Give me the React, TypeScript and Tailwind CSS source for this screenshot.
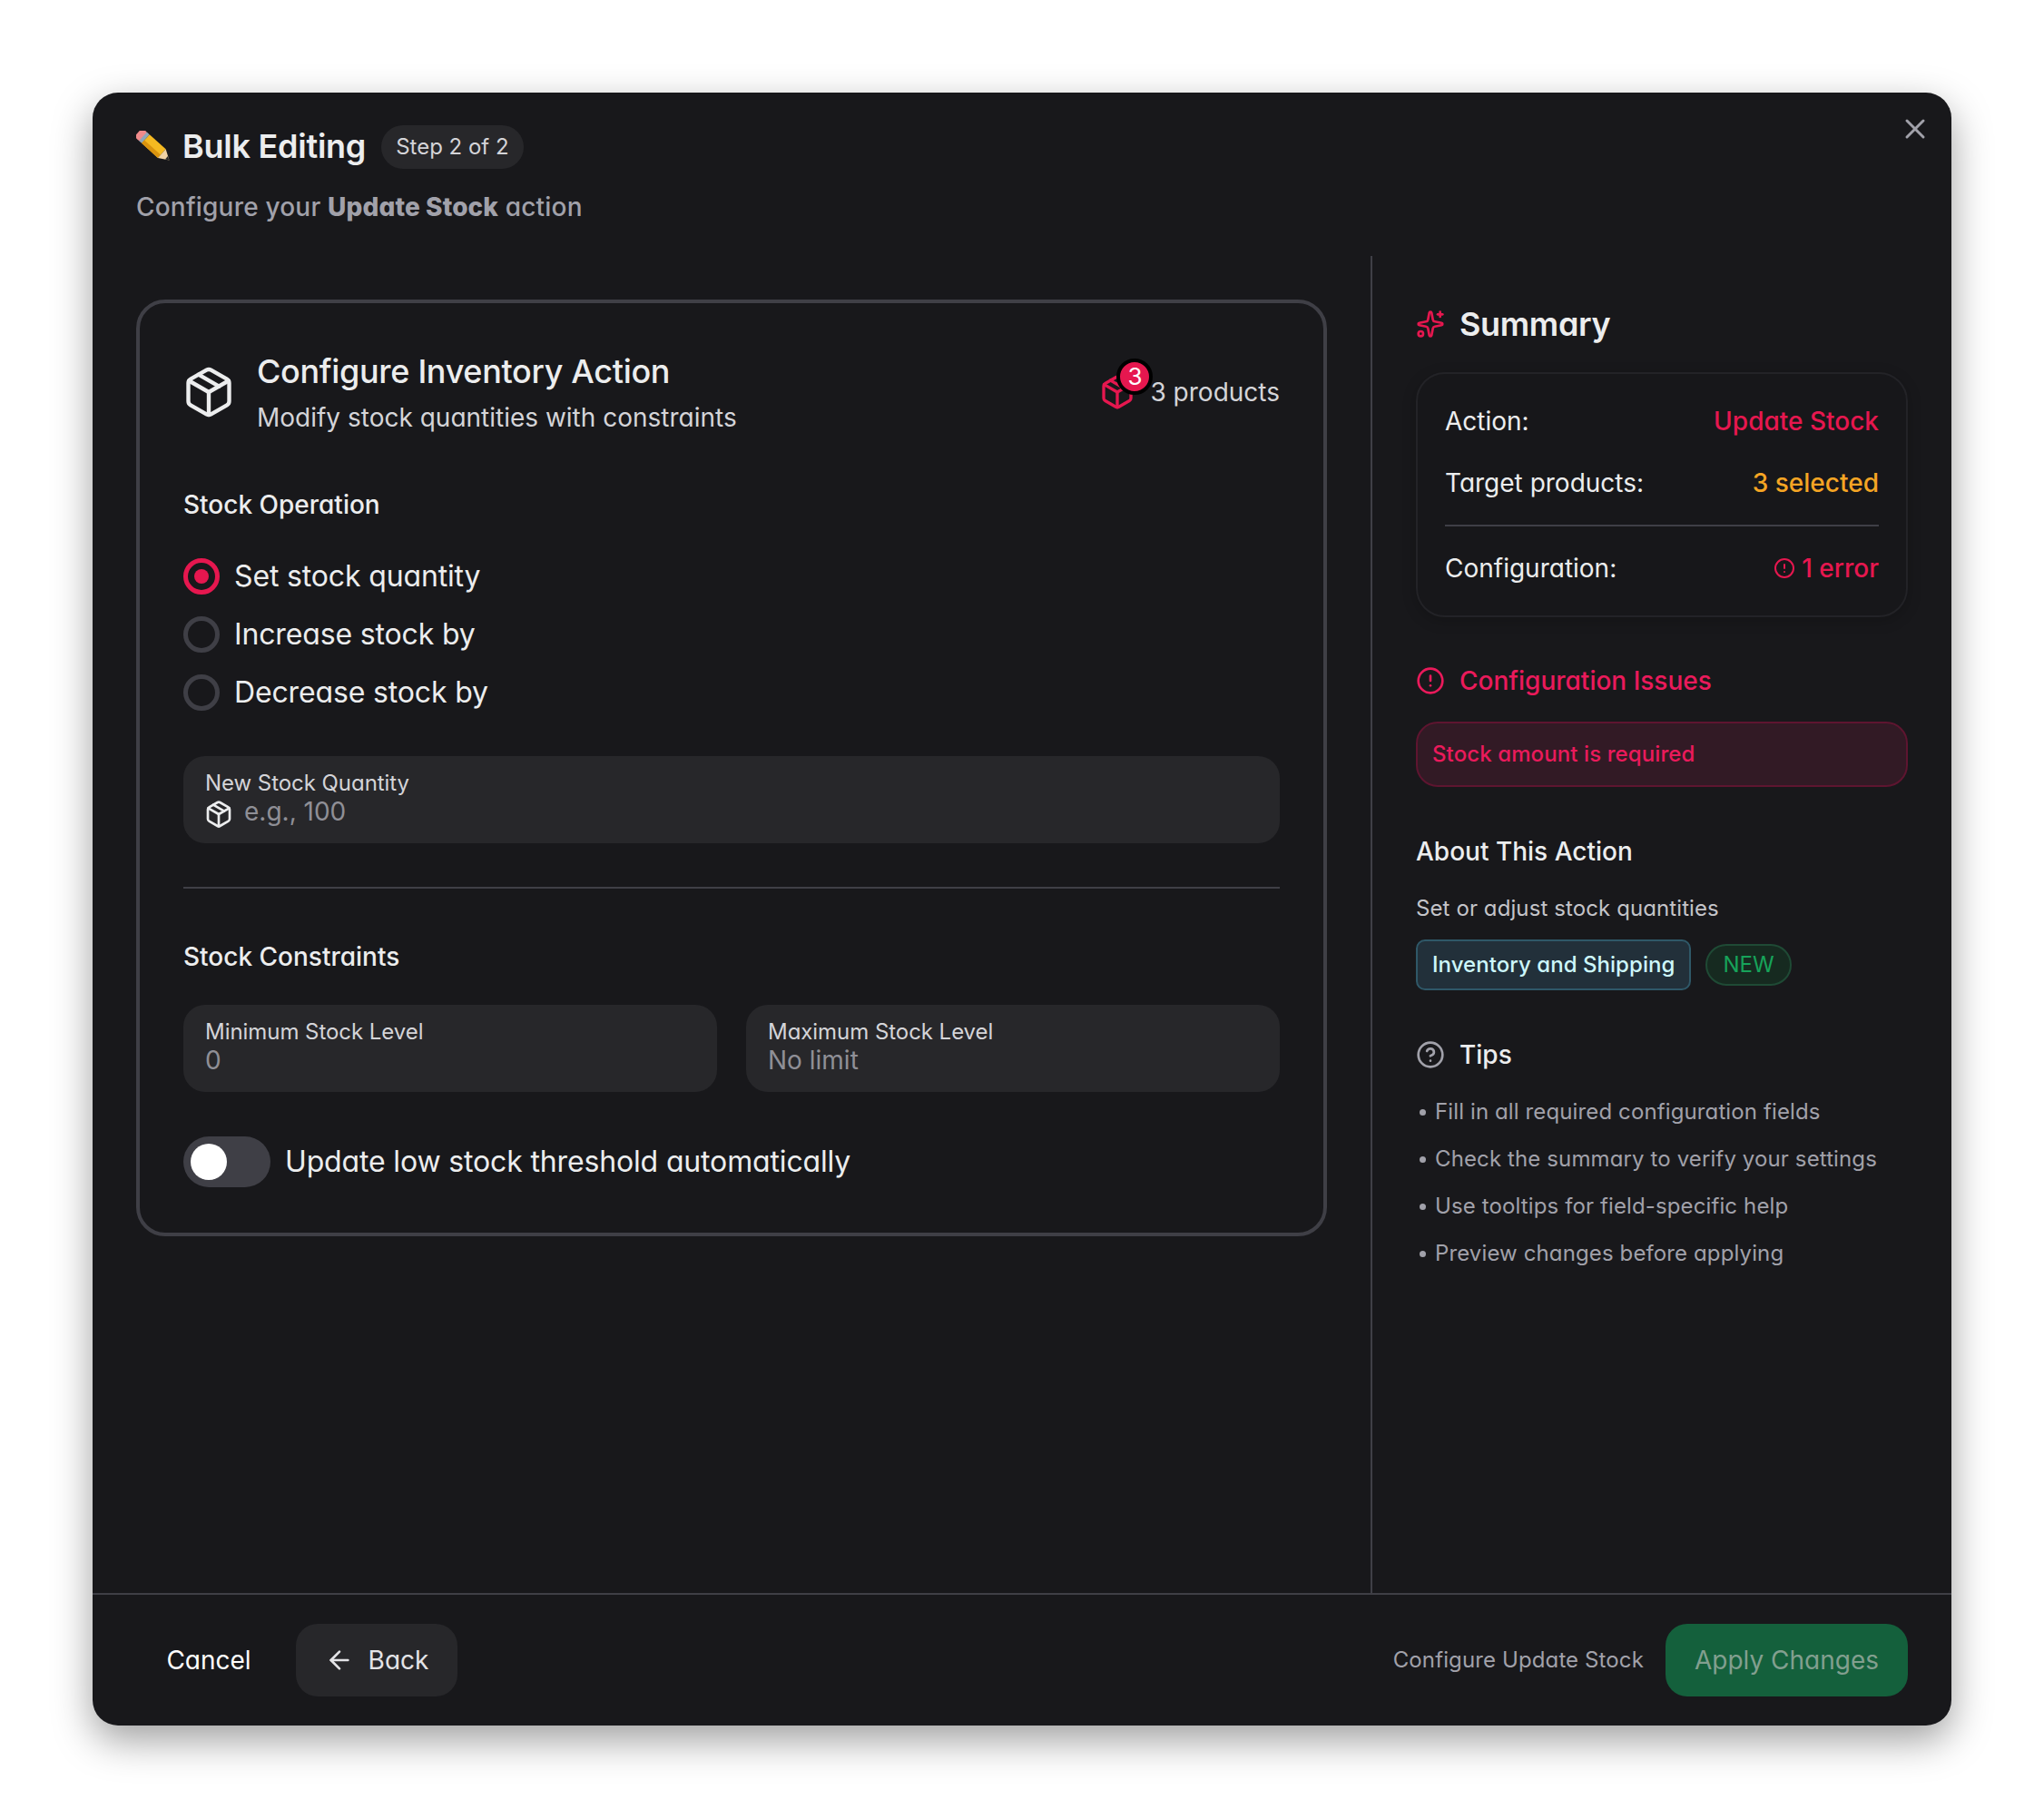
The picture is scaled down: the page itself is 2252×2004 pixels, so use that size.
import React from 'react';
import { Package, X, Sparkles, CircleAlert, CircleHelp, ArrowLeft } from 'lucide-react';

function PencilIcon() {
  return (
    <svg width="38" height="36" viewBox="0 0 38 36" className="shrink-0">
      <g transform="translate(6 5) rotate(42)">
        <rect x="-5" y="-6.5" width="9" height="13" rx="3.5" fill="#f08a8a" />
        <rect x="2" y="-6.5" width="4" height="13" fill="#8fa6b8" />
        <rect x="6" y="-6.5" width="24" height="13" fill="#f5b921" />
        <rect x="6" y="2" width="24" height="4.5" fill="#d9930f" />
        <polygon points="30,-6.5 30,6.5 41,0" fill="#f2d3a4" />
        <polygon points="37,-2.2 37,2.2 41,0" fill="#2b2b2b" />
      </g>
    </svg>
  );
}

function Radio({ label, checked }: { label: string; checked?: boolean }) {
  return (
    <div className="flex h-10 items-center gap-4">
      <span
        className={
          checked
            ? 'flex h-10 w-10 items-center justify-center rounded-full border-[5px] border-[#e6174f]'
            : 'flex h-10 w-10 items-center justify-center rounded-full border-[5px] border-[#3f3f46]'
        }
      >
        {checked && <span className="h-4 w-4 rounded-full bg-[#e6174f]" />}
      </span>
      <span className="text-[32px] leading-10 tracking-[-0.15px] text-[#ecedee]">{label}</span>
    </div>
  );
}

function Field({ label, value }: { label: string; value: string }) {
  return (
    <div className="h-24 flex-1 rounded-3xl bg-[#27272a] px-6 pt-[15px]">
      <div className="text-2xl leading-[30px] tracking-[-0.05px] text-[#d4d4d8]">{label}</div>
      <div className="text-[28px] leading-8 text-[#8f8f96]">{value}</div>
    </div>
  );
}

function SummaryRow({ label, children }: { label: string; children: React.ReactNode }) {
  return (
    <div className="flex h-10 items-center justify-between text-[28px] leading-10">
      <span className="text-[#ecedee]">{label}</span>
      {children}
    </div>
  );
}

const tips = [
  'Fill in all required configuration fields',
  'Check the summary to verify your settings',
  'Use tooltips for field-specific help',
  'Preview changes before applying',
];

export default function App() {
  return (
    <div className="flex h-[2004px] justify-center bg-white pt-[102px] [font-family:Inter,sans-serif] [font-feature-settings:'cv11']">
      <div className="relative flex h-[1799px] w-[2048px] flex-col rounded-[28px] bg-[#18181b] shadow-[0_16px_44px_rgba(0,0,0,0.38)]">
        <button className="absolute right-[22px] top-[22px] text-[#a1a1aa]">
          <X size={36} strokeWidth={2} />
        </button>

        {/* Header */}
        <header className="px-12 pb-[34px] pt-9">
          <div className="flex h-12 items-center">
            <PencilIcon />
            <h2 className="ml-[13px] -translate-y-px text-4xl font-semibold tracking-[-0.25px] text-[#ecedee]">Bulk Editing</h2>
            <span className="ml-[17px] flex h-12 items-center rounded-full bg-[#27272a] px-4 text-2xl text-[#d4d4d8]">
              Step 2 of 2
            </span>
          </div>
          <p className="mt-[22px] text-[28px] font-medium leading-10 tracking-[0.2px] text-[#a1a1aa]">
            Configure your <b className="font-extrabold tracking-[0.1px]">Update Stock</b> action
          </p>
        </header>

        {/* Body */}
        <div className="flex min-h-0 flex-1">
          <div className="w-[1408px] shrink-0 px-12 pt-12">
            <div className="rounded-[32px] border-4 border-[#3f3f46] px-12 pb-[50px] pt-[47px]">
              <div className="flex justify-between">
                <div className="flex items-center gap-[25px]">
                  <Package size={60} strokeWidth={1.75} className="-mx-0.5 translate-y-px text-[#ecedee]" />
                  <div>
                    <h3 className="text-4xl font-medium leading-14 tracking-[-0.32px] text-[#ecedee]">Configure Inventory Action</h3>
                    <p className="mt-[3px] text-[28px] leading-10 text-[#d4d4d8]">Modify stock quantities with constraints</p>
                  </div>
                </div>
                <div className="flex items-center gap-[16px] pt-[2px]">
                  <span className="relative">
                    <Package size={40} strokeWidth={2} className="text-[#e6174f]" />
                    <span className="absolute -right-[19px] -top-[17px] flex h-10 w-10 items-center justify-center rounded-full border-4 border-black bg-[#e6174f] text-[26px] text-white">
                      3
                    </span>
                  </span>
                  <span className="text-[28px] text-[#d4d4d8]">3 products</span>
                </div>
              </div>

              <div className="mt-14 text-[28px] font-medium leading-10 text-[#ecedee]">Stock Operation</div>
              <div className="mt-[39px] flex flex-col gap-6">
                <Radio label="Set stock quantity" checked />
                <Radio label="Increase stock by" />
                <Radio label="Decrease stock by" />
              </div>

              <div className="mt-[50px] h-24 rounded-3xl bg-[#27272a] px-6 pt-[15px]">
                <div className="text-2xl leading-[30px] tracking-[-0.05px] text-[#d4d4d8]">New Stock Quantity</div>
                <div className="flex h-8 items-center gap-[13px]">
                  <Package size={32} strokeWidth={2} className="-mx-px mt-[6px] text-[#ecedee]" />
                  <span className="text-[28px] leading-8 text-[#8f8f96]">e.g., 100</span>
                </div>
              </div>

              <div className="mt-[48px] h-0.5 bg-[#3f3f46]" />

              <div className="mt-[55px] text-[28px] font-medium leading-10 text-[#ecedee]">Stock Constraints</div>
              <div className="mt-[33px] flex gap-8">
                <Field label="Minimum Stock Level" value="0" />
                <Field label="Maximum Stock Level" value="No limit" />
              </div>

              <div className="mt-[49px] flex items-center gap-4">
                <span className="flex h-14 w-24 items-center rounded-full bg-[#3f3f46] pl-2">
                  <span className="h-10 w-10 rounded-full bg-white" />
                </span>
                <span className="text-[32px] leading-10 tracking-[-0.15px] text-[#ecedee]">Update low stock threshold automatically</span>
              </div>
            </div>
          </div>

          {/* Summary */}
          <aside className="flex-1 border-l-2 border-[#3f3f46] pl-12 pr-12 pt-[51px]">
            <div className="flex h-12 items-center gap-4">
              <Sparkles size={32} strokeWidth={2} className="text-[#e6174f]" />
              <h3 className="text-4xl font-semibold tracking-[-0.35px] text-[#ecedee]">Summary</h3>
            </div>

            <div className="mt-[29px] rounded-[32px] border-2 border-[#232327] bg-[#17171a] px-[30px] pb-[32px] pt-[32px] shadow-[0_4px_16px_rgba(0,0,0,0.2)]">
              <SummaryRow label="Action:">
                <span className="font-medium text-[#e6174f]">Update Stock</span>
              </SummaryRow>
              <div className="mt-7">
                <SummaryRow label="Target products:">
                  <span className="font-medium text-[#f5a524]">3 selected</span>
                </SummaryRow>
              </div>
              <div className="mt-[26px] h-0.5 bg-[#3f3f46]" />
              <div className="mt-[26px]">
                <SummaryRow label="Configuration:">
                  <span className="flex items-center gap-[7px] font-medium text-[#e6174f]">
                    <CircleAlert size={24} strokeWidth={2} />1 error
                  </span>
                </SummaryRow>
              </div>
            </div>

            <div className="mt-[50px] flex h-10 items-center gap-4">
              <CircleAlert size={32} strokeWidth={2} className="text-[#ea1a5b]" />
              <span className="text-[28px] font-medium text-[#ea1a5b]">Configuration Issues</span>
            </div>
            <div className="mt-[25px] flex h-[72px] items-center rounded-3xl border-2 border-[#5e1530] bg-[#321a25] px-4 text-2xl font-medium tracking-[0.1px] text-[#ea1a5b]">
              Stock amount is required
            </div>

            <div className="mt-[51px] text-[28px] font-medium leading-10 text-[#ecedee]">About This Action</div>
            <p className="mt-[27px] text-2xl leading-8 tracking-[0.1px] text-[#c4c4c9]">Set or adjust stock quantities</p>
            <div className="mt-[18px] flex items-center gap-4">
              <span className="flex h-14 items-center rounded-[10px] border-2 border-[#2f5868] bg-[#22303a] px-4 text-2xl font-medium tracking-[0.05px] text-[#cdf7fb]">
                Inventory and Shipping
              </span>
              <span className="flex h-[46px] items-center rounded-full border-2 border-[#1f4a35] bg-[#162a20] px-[17px] text-2xl text-[#17a35a]">
                NEW
              </span>
            </div>

            <div className="mt-[51px] flex h-10 items-center gap-4">
              <CircleHelp size={32} strokeWidth={2} className="text-[#a1a1aa]" />
              <span className="text-[28px] font-medium text-[#ecedee]">Tips</span>
            </div>
            <ul className="mt-[25px] flex flex-col gap-4 text-2xl leading-9 tracking-[0.12px] text-[#a1a1aa]">
              {tips.map((tip) => (
                <li key={tip} className="flex items-center gap-[10px]">
                  <span className="ml-1 h-[7px] w-[7px] rounded-full bg-[#a1a1aa]" />
                  {tip}
                </li>
              ))}
            </ul>
          </aside>
        </div>

        {/* Footer */}
        <footer className="flex items-center justify-between border-t-2 border-[#3f3f46] px-12 py-8">
          <div className="flex items-center gap-4">
            <button className="h-20 w-40 rounded-3xl text-[28px] text-white">Cancel</button>
            <button className="flex h-20 w-[178px] items-center justify-center gap-4 rounded-3xl bg-[#27272a] text-[28px] text-[#e4e4e7]">
              <ArrowLeft size={32} strokeWidth={2} />
              Back
            </button>
          </div>
          <div className="flex items-center gap-6">
            <span className="text-2xl tracking-[0.12px] text-[#a1a1aa]">Configure Update Stock</span>
            <button className="h-20 w-[267px] rounded-3xl bg-[#14603c] text-[28px] text-[#829f8f]">Apply Changes</button>
          </div>
        </footer>
      </div>
    </div>
  );
}
